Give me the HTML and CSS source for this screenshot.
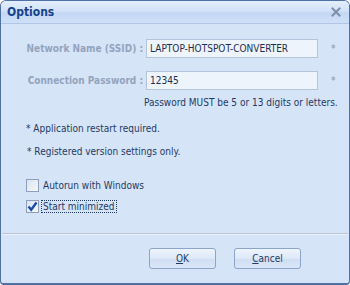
FILE: index.html
```html
<!DOCTYPE html>
<html lang="en">
    <head>
        <meta charset="UTF-8">
        <link rel="stylesheet" href="styles.css">
        <title>Options</title>
    </head>
    <body>
        <div class="window">
            <div class="titlebar">
                <span class="title">Options</span>
                <svg class="close-icon" width="10" height="10" viewBox="0 0 10 10">
                    <path d="M1.5 1.5 L8.5 8.5 M8.5 1.5 L1.5 8.5" stroke="#7e8ea8" stroke-width="2" stroke-linecap="square"/>
                </svg>
            </div>

            <div class="content">
                <div class="field-grid">
                    <label class="field-label">Network Name (SSID) :</label>
                    <div class="text-box">LAPTOP-HOTSPOT-CONVERTER</div>
                    <span class="star">*</span>

                    <label class="field-label">Connection Password :</label>
                    <div class="text-box">12345</div>
                    <span class="star">*</span>
                </div>
                <p class="hint">Password MUST be 5 or 13 digits or letters.</p>

                <p class="note">* Application restart required.</p>
                <p class="note note-second">* Registered version settings only.</p>

                <div class="check-row">
                    <span class="check-box"></span>
                    <span class="check-text">Autorun with Windows</span>
                </div>
                <div class="check-row">
                    <span class="check-box">
                        <svg width="11" height="11" viewBox="0 0 11 11">
                            <path d="M1.5 5.5 L4.2 8.8 L9.5 1.5" fill="none" stroke="#1a4cb0" stroke-width="2.4"/>
                        </svg>
                    </span>
                    <span class="check-text focused">Start minimized</span>
                </div>
            </div>

            <div class="separator"></div>

            <div class="button-row">
                <button class="dlg-button"><u>O</u>K</button>
                <button class="dlg-button"><u>C</u>ancel</button>
            </div>
        </div>
    </body>
</html>
```

FILE: styles.css
```css
body,
html {
    margin: 0;
    width: 350px;
    height: 285px;
    font-family: "DejaVu Sans Condensed", "DejaVu Sans", sans-serif;
    font-size: 10px;
    background: #ffffff;
}

.window {
    box-sizing: border-box;
    width: 350px;
    height: 285px;
    display: flex;
    flex-direction: column;
    background: #d6e4f8;
    border: 1px solid #4f71a6;
    border-bottom-width: 2px;
    border-radius: 6px 6px 4px 4px;
    overflow: hidden;
}

.titlebar {
    height: 22px;
    display: flex;
    align-items: center;
    justify-content: space-between;
    padding: 0 8px 0 6px;
    background: linear-gradient(#e4eefc 0%, #d2e2f8 45%, #c3d7f4 55%, #cfe0f8 100%);
    border-bottom: 1px solid #afc6e6;
}

.title {
    font-weight: bold;
    font-size: 12px;
    color: #15428b;
}

.content {
    flex: 1;
    padding-top: 15px;
}

.field-grid {
    display: grid;
    grid-template-columns: 141px 172px 1fr;
    column-gap: 3px;
    row-gap: 13px;
    align-items: center;
    padding-left: 1px;
}

.field-label {
    text-align: right;
    font-weight: bold;
    color: #93a3bd;
    font-size: 10px;
}

.text-box {
    box-sizing: border-box;
    height: 19px;
    line-height: 17px;
    padding: 0 3px;
    background: #eef4fc;
    border: 1px solid #b4c4dc;
    color: #1e2f4d;
    white-space: nowrap;
}

.star {
    padding-left: 10px;
    color: #8696b2;
}

.hint {
    margin: 7px 0 0 143px;
    color: #1e3a64;
    white-space: nowrap;
}

.note {
    margin: 15px 0 0 25px;
    color: #1e3a64;
}

.note-second {
    margin-top: 12px;
    margin-left: 26px;
}

.check-row {
    display: flex;
    align-items: center;
    margin: 22px 0 0 25px;
    color: #1e3a64;
}

.check-row + .check-row {
    margin-top: 8px;
}

.check-box {
    box-sizing: border-box;
    width: 13px;
    height: 13px;
    display: flex;
    align-items: center;
    justify-content: center;
    border: 1px solid #8d9fbd;
    background: linear-gradient(135deg, #dbe3ee, #f6f9fd);
    margin-right: 2px;
}

.check-text {
    padding: 0 1px;
    border: 1px dotted transparent;
}

.check-text.focused {
    border-color: #1e3a64;
}

.separator {
    height: 1px;
    margin: 0 1px 13px;
    background: #b7c3d6;
    border-bottom: 1px solid #eef3fb;
}

.button-row {
    display: flex;
    justify-content: flex-end;
    gap: 18px;
    padding: 0 48px 14px 0;
}

.dlg-button {
    width: 67px;
    height: 21px;
    padding: 0;
    font-family: "DejaVu Sans Condensed", "DejaVu Sans", sans-serif;
    font-size: 10px;
    color: #1e3a64;
    border: 1px solid #8ca4c8;
    border-radius: 3px;
    background: linear-gradient(#eef4fd 0%, #dde8f8 50%, #cfddf3 51%, #dbe7f8 100%);
}
```
